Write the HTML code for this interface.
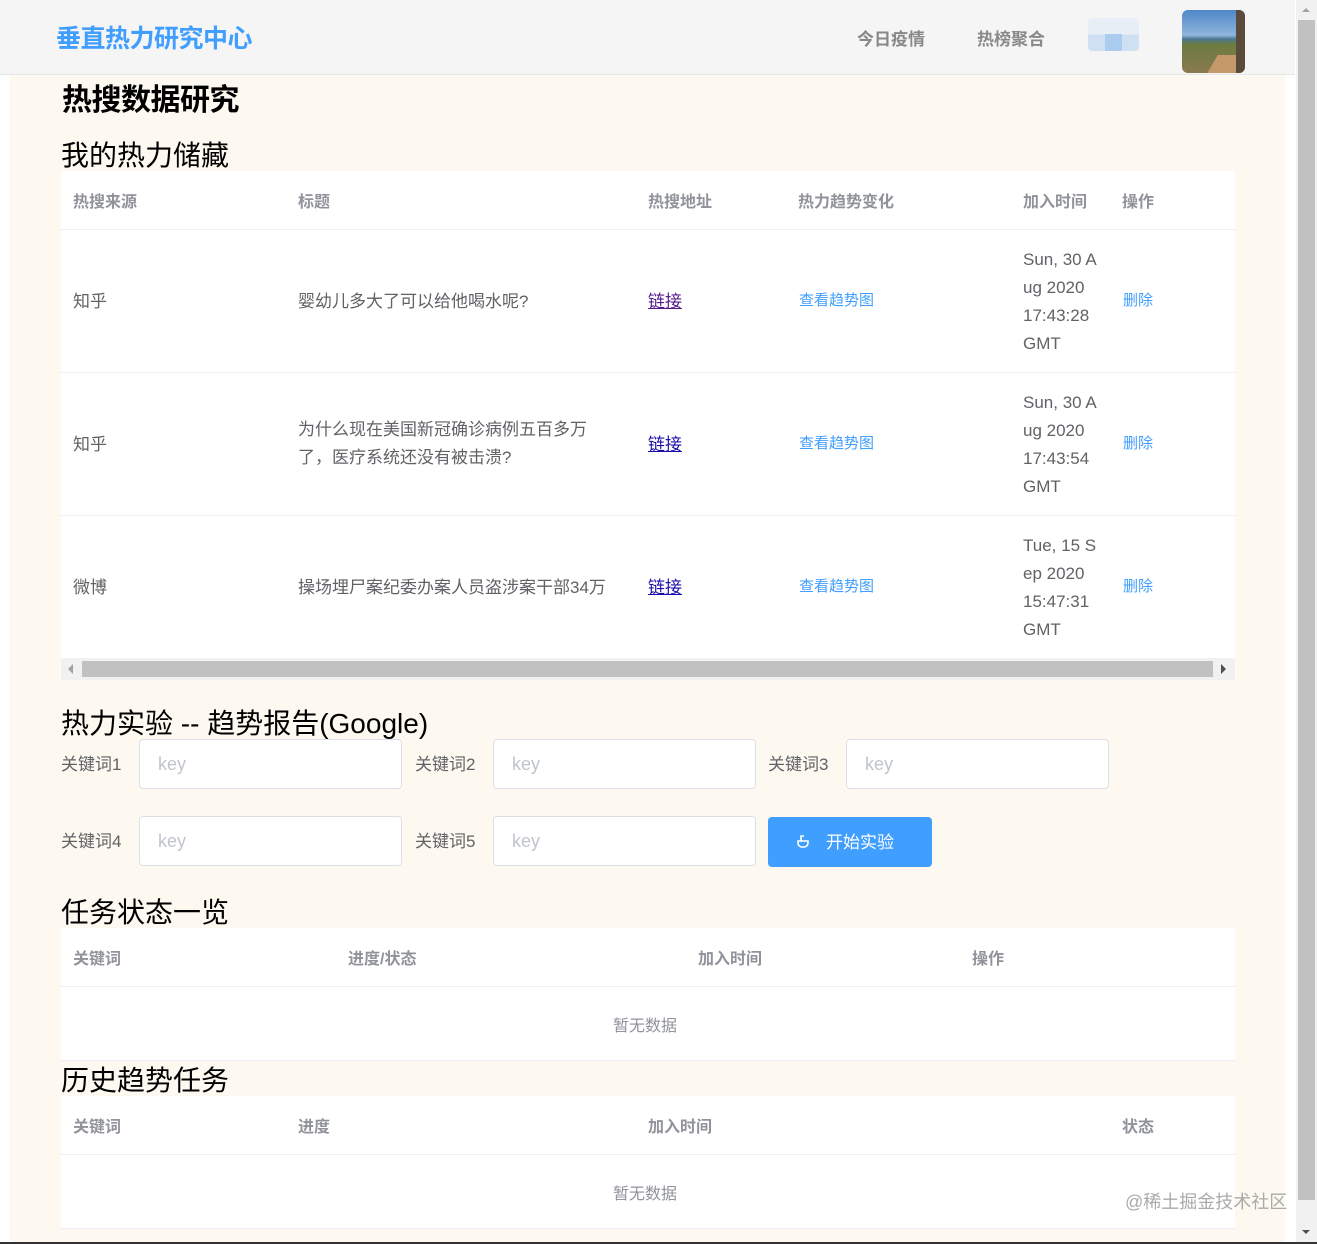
<!DOCTYPE html>
<html><head><meta charset="utf-8"><style>
*{margin:0;padding:0;box-sizing:border-box}
body{width:1317px;height:1244px;overflow:hidden;background:#fff;font-family:"Liberation Sans","Noto Sans CJK SC",sans-serif;position:relative;color:#606266}
.a{position:absolute}
.t{margin-top:-3px}
.main{left:10px;top:75px;width:1275px;height:1169px;background:#fdf9f0}
.hdr{left:0;top:0;width:1295px;height:75px;background:#f5f5f5;border-bottom:1px solid #e6e6e6}
.logo{left:56px;top:19px;font-size:25px;font-weight:bold;color:#409eff;letter-spacing:-0.5px}
.nav{top:25px;font-size:17px;font-weight:bold;color:#888}
.h1{left:62px;top:75px;font-size:30px;font-weight:bold;color:#000;letter-spacing:-0.5px}
.h2{left:61px;font-size:28px;color:#000;margin-top:-3px}
.tbl{left:61px;width:1174px;background:#fff}
.th{font-size:16px;font-weight:bold;color:#909399;margin-top:-3px}
.td{font-size:17px;color:#606266;margin-top:-3px}
.line{left:61px;width:1174px;height:1px;background:#ebeef5}
.lnk{color:#1a0dab;text-decoration:underline;font-size:17px;margin-top:-3px}
.blue{color:#409eff;font-size:15px;margin-top:-2px}
.date{font-size:17px;line-height:28px;color:#606266;width:80px;margin-top:1px}
.lab{font-size:17px;color:#606266;margin-top:-4px}
.inp{width:263px;height:50px;background:#fff;border:1px solid #dcdfe6;border-radius:4px;font-size:18px;color:#c0c4cc;padding:14px 18px}
.empty{font-size:16px;color:#909399;margin-top:-3px}
</style></head><body>
<div class="a main"></div>
<div class="a hdr"></div>
<div class="a logo">垂直热力研究中心</div>
<div class="a nav" style="left:857px">今日疫情</div>
<div class="a nav" style="left:977px">热榜聚合</div>
<div class="a" style="left:1088px;top:18px;width:51px;height:33px;border-radius:4px;background:linear-gradient(#e8eef5 0,#e8eef5 50%,#cfe0f3 50%)"><div class="a" style="left:17px;top:16px;width:17px;height:17px;background:#a9ccf0"></div></div>
<div class="a" style="left:1182px;top:10px;width:63px;height:63px;border-radius:6px;overflow:hidden;background:linear-gradient(#4f87c8 0,#8fb5dc 40%,#4a7890 46%,#6d7b40 55%,#8a7a50 100%)"><div class="a" style="left:30px;top:45px;width:40px;height:20px;background:#c49a6a;transform:skewX(-30deg)"></div><div class="a" style="right:0;top:0;width:9px;height:63px;background:#5a4a3a"></div></div>

<div class="a h1">热搜数据研究</div>
<div class="a h2" style="top:137px">我的热力储藏</div>

<div class="a tbl" style="top:171px;height:487px"></div>
<div class="a th" style="left:73px;top:191px">热搜来源</div>
<div class="a th" style="left:298px;top:191px">标题</div>
<div class="a th" style="left:648px;top:191px">热搜地址</div>
<div class="a th" style="left:798px;top:191px">热力趋势变化</div>
<div class="a th" style="left:1023px;top:191px">加入时间</div>
<div class="a th" style="left:1122px;top:191px">操作</div>
<div class="a line" style="top:229px"></div>
<div class="a line" style="top:372px"></div>
<div class="a line" style="top:515px"></div>

<div class="a td" style="left:73px;top:290px">知乎</div>
<div class="a td" style="left:298px;top:290px">婴幼儿多大了可以给他喝水呢?</div>
<div class="a lnk" style="left:648px;top:290px;color:#551a8b">链接</div>
<div class="a blue" style="left:799px;top:291px">查看趋势图</div>
<div class="a date" style="left:1023px;top:245px">Sun, 30 A<br>ug 2020<br>17:43:28<br>GMT</div>
<div class="a blue" style="left:1123px;top:291px">删除</div>

<div class="a td" style="left:73px;top:433px">知乎</div>
<div class="a td" style="left:298px;top:419px;line-height:28px;width:310px">为什么现在美国新冠确诊病例五百多万了，医疗系统还没有被击溃?</div>
<div class="a lnk" style="left:648px;top:433px">链接</div>
<div class="a blue" style="left:799px;top:434px">查看趋势图</div>
<div class="a date" style="left:1023px;top:388px">Sun, 30 A<br>ug 2020<br>17:43:54<br>GMT</div>
<div class="a blue" style="left:1123px;top:434px">删除</div>

<div class="a td" style="left:73px;top:576px">微博</div>
<div class="a td" style="left:298px;top:576px">操场埋尸案纪委办案人员盗涉案干部34万</div>
<div class="a lnk" style="left:648px;top:576px">链接</div>
<div class="a blue" style="left:799px;top:577px">查看趋势图</div>
<div class="a date" style="left:1023px;top:531px">Tue, 15 S<br>ep 2020<br>15:47:31<br>GMT</div>
<div class="a blue" style="left:1123px;top:577px">删除</div>

<div class="a" style="left:61px;top:658px;width:1174px;height:22px;background:#f1f1f1"></div>
<div class="a" style="left:82px;top:661px;width:1131px;height:16px;background:#c1c1c1"></div>
<div class="a" style="left:68px;top:664px;width:0;height:0;border-top:5px solid transparent;border-bottom:5px solid transparent;border-right:5px solid #a3a3a3"></div>
<div class="a" style="left:1221px;top:664px;width:0;height:0;border-top:5px solid transparent;border-bottom:5px solid transparent;border-left:5px solid #505050"></div>

<div class="a h2" style="top:705px">热力实验 -- 趋势报告(Google)</div>
<div class="a lab" style="left:61px;top:754px">关键词1</div>
<div class="a inp" style="left:139px;top:739px">key</div>
<div class="a lab" style="left:415px;top:754px">关键词2</div>
<div class="a inp" style="left:493px;top:739px">key</div>
<div class="a lab" style="left:768px;top:754px">关键词3</div>
<div class="a inp" style="left:846px;top:739px">key</div>
<div class="a lab" style="left:61px;top:831px">关键词4</div>
<div class="a inp" style="left:139px;top:816px">key</div>
<div class="a lab" style="left:415px;top:831px">关键词5</div>
<div class="a inp" style="left:493px;top:816px">key</div>
<div class="a" style="left:768px;top:817px;width:164px;height:50px;background:#409eff;border-radius:4px;color:#fff;font-size:17px;padding-top:11px;padding-left:58px">开始实验</div>
<svg class="a" style="left:795px;top:833px" width="16" height="16" viewBox="0 0 16 16"><path d="M3 8h10v2a4 4 0 0 1-4 4H7a4 4 0 0 1-4-4z M6 8V3h3" fill="none" stroke="#fff" stroke-width="1.6"/></svg>

<div class="a h2" style="top:894px">任务状态一览</div>
<div class="a tbl" style="top:928px;height:133px"></div>
<div class="a th" style="left:73px;top:948px">关键词</div>
<div class="a th" style="left:348px;top:948px">进度/状态</div>
<div class="a th" style="left:698px;top:948px">加入时间</div>
<div class="a th" style="left:972px;top:948px">操作</div>
<div class="a line" style="top:986px"></div>
<div class="a line" style="top:1060px"></div>
<div class="a empty" style="left:613px;top:1015px">暂无数据</div>

<div class="a h2" style="top:1062px">历史趋势任务</div>
<div class="a tbl" style="top:1096px;height:133px"></div>
<div class="a th" style="left:73px;top:1116px">关键词</div>
<div class="a th" style="left:298px;top:1116px">进度</div>
<div class="a th" style="left:648px;top:1116px">加入时间</div>
<div class="a th" style="left:1122px;top:1116px">状态</div>
<div class="a line" style="top:1154px"></div>
<div class="a line" style="top:1228px"></div>
<div class="a empty" style="left:613px;top:1183px">暂无数据</div>
<div class="a" style="left:1125px;top:1188px;font-size:18px;color:#aaa">@稀土掘金技术社区</div>

<div class="a" style="left:1296px;top:0;width:21px;height:1244px;background:#f1f1f1"></div>
<div class="a" style="left:1298px;top:20px;width:17px;height:1180px;background:#c1c1c1"></div>
<div class="a" style="left:1302px;top:8px;width:0;height:0;border-left:4px solid transparent;border-right:4px solid transparent;border-bottom:4px solid #a3a3a3"></div>
<div class="a" style="left:1302px;top:1230px;width:0;height:0;border-left:4px solid transparent;border-right:4px solid transparent;border-top:4px solid #505050"></div>
<div class="a" style="left:0;top:1242px;width:1317px;height:2px;background:#333"></div>
</body></html>
